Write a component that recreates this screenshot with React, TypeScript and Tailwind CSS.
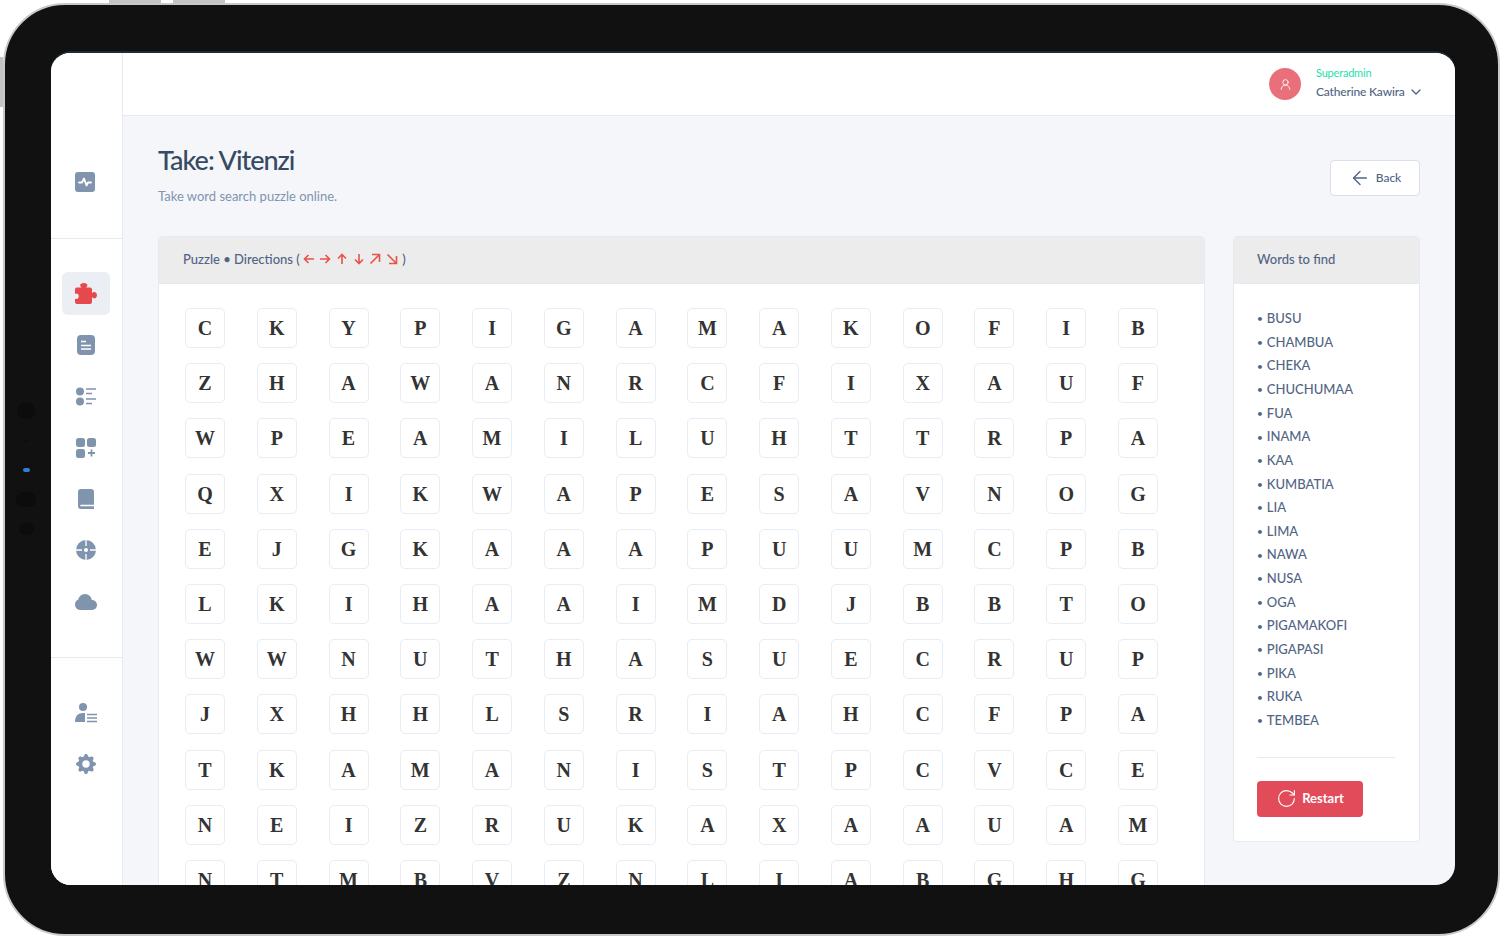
import { ArrowLeft, ChevronDown, RotateCw, UserRound } from 'lucide-react';
import { BsGearFill } from 'react-icons/bs';

const GRID = [
  'CKYPIGAMAKOFIB',
  'ZHAWANRCFIXAUF',
  'WPEAMILUHTTRPA',
  'QXIKWAPESAVNOG',
  'EJGKAAAPUUMCPB',
  'LKIHAAIMDJBBTO',
  'WWNUTHASUECRUP',
  'JXHHLSRIAHCFPA',
  'TKAMANISTPCVCE',
  'NEIZRUKAXAAUAM',
  'NTMBVZNLIABGHG',
];

const WORDS = [
  'BUSU', 'CHAMBUA', 'CHEKA', 'CHUCHUMAA', 'FUA', 'INAMA', 'KAA', 'KUMBATIA', 'LIA', 'LIMA',
  'NAWA', 'NUSA', 'OGA', 'PIGAMAKOFI', 'PIGAPASI', 'PIKA', 'RUKA', 'TEMBEA',
];

// direction arrows in the puzzle header, drawn in a 12px box
const ARROWS = [
  'M11 6H1.5M5.5 2L1.5 6l4 4',
  'M1 6h9.5M6.500 2l4 4-4 4',
  'M6 11V1.500M2 5.500l4-4 4 4',
  'M6 1v9.500M2 6.500l4 4 4-4',
  'M1.500 10.500l9-9M3 1.500h7.500V9',
  'M1.500 1.500l9 9M3 10.500h7.500V3',
];

function PulseIcon() {
  return (
    <svg width="20" height="20" viewBox="0 0 20 20">
      <rect width="20" height="20" rx="3" fill="#8094ae" />
      <path d="M4 10.500h3l2-4 2.500 7 1.500-3h3" fill="none" stroke="#fff" strokeWidth="1.8" strokeLinecap="round" strokeLinejoin="round" />
    </svg>
  );
}

function PuzzleIcon() {
  return (
    <svg width="22" height="21" viewBox="0 0 22 21">
      <path
        d="M2 4.500h4.500c-1-.8-1.300-1.600-1.300-2.300C5.200 1 6.800 0 8.800 0s3.600 1 3.600 2.200c0 .7-.4 1.500-1.300 2.300H15a2 2 0 0 1 2 2v3.600c.8-.8 1.500-1.100 2.200-1.100 1.500 0 2.800 1.400 2.800 3.200s-1.300 3.200-2.800 3.200c-.7 0-1.400-.3-2.200-1.100V19a2 2 0 0 1-2 2H2a2 2 0 0 1-2-2v-3.500c.5.4 1 .6 1.500.6 1.300 0 2.300-1.200 2.300-2.800S2.800 10.500 1.500 10.500c-.5 0-1 .2-1.500.6V6.500a2 2 0 0 1 2-2z"
        fill="#e5484d"
      />
    </svg>
  );
}

function DocIcon() {
  return (
    <svg width="18" height="20" viewBox="0 0 18 20">
      <rect width="18" height="20" rx="4" fill="#8094ae" />
      <path d="M4 6.500h5M4 10.500h10M4 14h10" stroke="#fff" strokeWidth="1.600" />
    </svg>
  );
}

function ListIcon() {
  return (
    <svg width="20" height="19" viewBox="0 0 20 19">
      <circle cx="4" cy="4.500" r="4" fill="#8094ae" />
      <circle cx="4" cy="14.500" r="4" fill="#8094ae" />
      <path d="M10 2h10M10 6.500h6M10 12h10M10 16.500h6" stroke="#8094ae" strokeWidth="1.500" />
    </svg>
  );
}

function AppsAddIcon() {
  return (
    <svg width="20" height="20" viewBox="0 0 20 20">
      <rect width="9" height="9" rx="2.500" fill="#8094ae" />
      <rect x="11" width="9" height="9" rx="2.500" fill="#8094ae" />
      <rect y="11" width="9" height="9" rx="2.500" fill="#8094ae" />
      <path d="M15.500 11.500v7M12 15h7" stroke="#8094ae" strokeWidth="1.800" />
    </svg>
  );
}

function BookIcon() {
  return (
    <svg width="16" height="20" viewBox="0 0 16 20">
      <path d="M3 0h10a3 3 0 0 1 3 3v17H3a3 3 0 0 1-3-3V3a3 3 0 0 1 3-3z" fill="#8094ae" />
      <path d="M3 16.500h13" stroke="#fff" strokeWidth="1.600" strokeLinecap="round" />
    </svg>
  );
}

function TargetIcon() {
  return (
    <svg width="20" height="20" viewBox="0 0 20 20">
      <circle cx="10" cy="10" r="10" fill="#8094ae" />
      <circle cx="10" cy="10" r="2" fill="#fff" />
      <path d="M10 0v6M10 14v6M0 10h6M14 10h6" stroke="#fff" strokeWidth="1.300" />
    </svg>
  );
}

function CloudIcon() {
  return (
    <svg width="22" height="16" viewBox="0 0 22 16" fill="#8094ae">
      <circle cx="5.500" cy="10.500" r="5.500" />
      <circle cx="10" cy="7" r="7" />
      <circle cx="17" cy="11" r="5" />
      <rect x="5.500" y="10" width="11.500" height="6" />
    </svg>
  );
}

function UserListIcon() {
  return (
    <svg width="22" height="20" viewBox="0 0 22 20">
      <circle cx="8" cy="4" r="4" fill="#8094ae" />
      <path d="M0 19c0-6 3-9 8-9h2v9z" fill="#8094ae" />
      <path d="M12 11.500h10M12 15h10M12 18.500h10" stroke="#8094ae" strokeWidth="1.500" />
    </svg>
  );
}

function SideItem({ children, active }: { children: React.ReactNode; active?: boolean }) {
  return (
    <div className={`w-12 h-[43px] flex items-center justify-center rounded-md ${active ? 'bg-[#ebeef2]' : ''}`}>
      {children}
    </div>
  );
}

function Sidebar() {
  return (
    <aside className="w-[71px] shrink-0 bg-white border-r border-[#e5e9f2] box-content flex flex-col">
      <div className="h-[186px] shrink-0 border-b border-[#e5e9f2] flex items-start justify-center pt-[119px] pr-[3px]">
        <PulseIcon />
      </div>
      <div className="h-[419px] shrink-0 border-b border-[#e5e9f2] flex flex-col items-center pt-[33px] pr-[2px] gap-[8.4px]">
        <SideItem active><PuzzleIcon /></SideItem>
        <SideItem><DocIcon /></SideItem>
        <SideItem><ListIcon /></SideItem>
        <SideItem><AppsAddIcon /></SideItem>
        <SideItem><BookIcon /></SideItem>
        <SideItem><TargetIcon /></SideItem>
        <SideItem><CloudIcon /></SideItem>
      </div>
      <div className="flex flex-col items-center pt-[33px] pr-[2px] gap-[8.4px]">
        <SideItem><UserListIcon /></SideItem>
        <SideItem><BsGearFill size={20} color="#8094ae" /></SideItem>
      </div>
    </aside>
  );
}

function Header() {
  return (
    <header className="h-[63px] shrink-0 bg-white border-b border-[#e5e9f2] flex items-center justify-end pr-[35px]">
      <div className="w-[32px] h-[32px] rounded-full bg-[#e9707a] flex items-center justify-center mr-[15px]">
        <UserRound size={13} color="#fff" strokeWidth={1.6} />
      </div>
      <div className="flex flex-col w-[104px] -mt-[2px]">
        <span className="text-[11px] leading-[12px] text-[#1ee0ac] tracking-[-0.2px]">Superadmin</span>
        <span className="mt-[6px] h-[14px] text-[12px] leading-[14px] font-medium text-[#526484] flex items-center whitespace-nowrap tracking-[-0.17px]">
          Catherine Kawira
          <ChevronDown size={16} color="#526484" strokeWidth={2} className="ml-[3px] shrink-0" />
        </span>
      </div>
    </header>
  );
}

function PuzzlePanel() {
  return (
    <section className="w-[1047px] shrink-0 bg-white border border-[#e5e9f2] rounded-t-[4px] overflow-hidden">
      <div className="h-[47px] bg-[#ececec] border-b border-[#e5e9f2] flex items-center pl-[24px] text-[13px] font-medium text-[#526484] whitespace-nowrap">
        Puzzle • Directions (
        <span className="flex items-center gap-[4.7px] ml-[3px] mr-[4px] -mt-[2px]">
          {ARROWS.map((d) => (
            <svg key={d} width="12" height="12" viewBox="0 0 12 12" fill="none" stroke="#e85347" strokeWidth="1.6">
              <path d={d} />
            </svg>
          ))}
        </span>
        )
      </div>
      <div className="pl-[26px] pt-[24px] w-[999px] grid grid-cols-[repeat(14,40px)] justify-between gap-y-[15.2px]">
        {GRID.flatMap((row, r) =>
          row.split('').map((letter, c) => (
            <div
              key={`${r}-${c}`}
              className="h-[40px] rounded-[5px] border border-[#e9ecf5] bg-white flex items-center justify-center font-['Liberation_Serif',serif] font-bold text-[20px] text-[#333333]"
            >
              {letter}
            </div>
          ))
        )}
      </div>
    </section>
  );
}

function WordsPanel() {
  return (
    <section className="w-[187px] shrink-0 h-[606px] bg-white border border-[#e5e9f2] rounded-[4px] overflow-hidden">
      <div className="h-[47px] bg-[#ececec] border-b border-[#e5e9f2] flex items-center pl-[23px] text-[13px] font-medium text-[#526484]">
        Words to find
      </div>
      <div className="pl-[23px] pr-[24px] pt-[23px]">
        <ul className="flex flex-col">
          {WORDS.map((word) => (
            <li key={word} className="h-[23.65px] flex items-center text-[13px] font-medium text-[#526484] whitespace-nowrap">
              <span className="text-[10px] mr-[4px]">•</span>
              {word}
            </li>
          ))}
        </ul>
        <div className="mt-[24px] border-t border-[#e5e9f2]" />
        <button className="mt-[23px] w-[106px] h-[36px] rounded-[4px] bg-[#e14b5a] text-white text-[13px] font-bold flex items-center justify-center gap-[5px]">
          <RotateCw size={21} color="#fff" strokeWidth={1.3} />
          Restart
        </button>
      </div>
    </section>
  );
}

function App() {
  return (
    <div className="relative w-[1500px] h-[938px] bg-white overflow-hidden font-['Lato',sans-serif] pt-[3px] pl-[3px] pb-[2px]">
      {/* hardware buttons */}
      <div className="absolute left-[109px] top-0 w-[52px] h-[3px] bg-[#c4c4c4]" />
      <div className="absolute left-[173px] top-0 w-[52px] h-[3px] bg-[#c4c4c4]" />
      <div className="absolute left-0 top-[57px] w-[3px] h-[50px] bg-[#c4c4c4]" />

      <div className="relative h-[933px] w-[1497px] rounded-[62px] bg-[#111111] border-2 border-[#c9c9c9] pt-[46px] pl-[46px]">
        {/* front camera and sensors */}
        <div className="absolute left-[12px] top-[398px] w-[18px] h-[16px] rounded-full bg-[#0c0c0c]" />
        <div className="absolute left-[20px] top-[434px] w-[3px] h-[3px] rounded-full bg-[#0c0c0c]" />
        <div className="absolute left-[18px] top-[463px] w-[7px] h-[4px] rounded-full bg-[#2f7fd8]" />
        <div className="absolute left-[11px] top-[487px] w-[20px] h-[15px] rounded-full bg-[#0c0c0c]" />
        <div className="absolute left-[14px] top-[518px] w-[15px] h-[12px] rounded-full bg-[#0c0c0c]" />

        <div className="w-[1404px] h-[834px] rounded-[20px] border-t-2 border-[#1c2b36] overflow-hidden flex bg-[#f5f6fa]">
          <Sidebar />
          <div className="flex-1 min-w-0 flex flex-col">
            <Header />
            <main className="flex-1 min-h-0 pl-[35px] pr-[35px] overflow-hidden">
              <div className="flex items-start justify-between pt-[26px] h-[120px]">
                <div>
                  <h1 className="text-[27px] leading-[36px] font-medium text-[#364a63] tracking-[-1px]">Take: Vitenzi</h1>
                  <p className="mt-[8px] text-[13px] leading-[20px] text-[#8094ae]">Take word search puzzle online.</p>
                </div>
                <button className="mt-[18px] w-[90px] h-[36px] bg-white border border-[#dbdfea] rounded-[4px] flex items-center justify-center gap-[5px] text-[12px] font-medium text-[#526484]">
                  <ArrowLeft size={22} color="#526484" strokeWidth={1.5} />
                  Back
                </button>
              </div>
              <div className="flex items-start gap-[28px]">
                <PuzzlePanel />
                <WordsPanel />
              </div>
            </main>
          </div>
        </div>
      </div>
    </div>
  );
}

export default App;
